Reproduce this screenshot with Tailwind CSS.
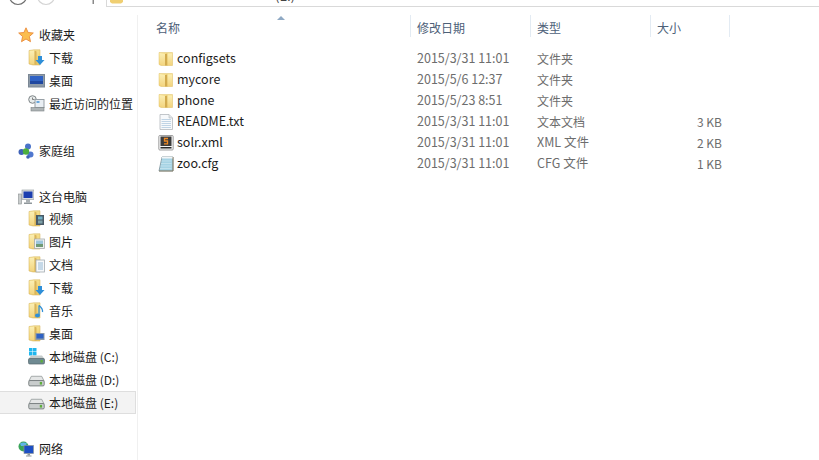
<!DOCTYPE html>
<html lang="zh-CN">
<head>
  <meta charset="UTF-8">
  <title>文件资源管理器</title>
  <script src="https://cdn.jsdelivr.net/npm/@tailwindcss/browser@4"></script>
</head>
<body class="bg-white">
  <!-- shared icons -->
  <svg class="absolute w-0 h-0">
    <defs>
      <linearGradient id="paleY" x1="0" y1="0" x2="0" y2="1"><stop offset="0" stop-color="#fbefb4"/><stop offset="1" stop-color="#f3d47e"/></linearGradient>
      <linearGradient id="deepY" x1="0" y1="0" x2="0" y2="1"><stop offset="0" stop-color="#f6e08e"/><stop offset="1" stop-color="#ecc762"/></linearGradient>
    </defs>
    <symbol id="folder" viewBox="0 0 16 16">
      <path d="M1 1.500 H14.500 V14.500 H3 L1 13.500 Z" fill="url(#deepY)" stroke="#e0c26c" stroke-width=".5"/>
      <path d="M1.500 2 L7 3 V14.500 L1.500 13.500 Z" fill="url(#paleY)"/>
      <path d="M7 3 L9.500 2.500 V14.500 H7 Z" fill="#d2ab4e"/>
      <path d="M9.500 2.500 H14 V14 H9.500 Z" fill="url(#paleY)"/>
    </symbol>
    <symbol id="navfolder" viewBox="0 0 16 18">
      <path d="M1 1.500 L6 .8 H12 V16 H5 L1 15 Z" fill="url(#deepY)" stroke="#d9bb68" stroke-width=".6"/>
      <path d="M1.600 2 L6.500 1.500 V15.600 L1.600 14.600 Z" fill="url(#paleY)"/>
      <path d="M6.500 1.500 L8.500 2.600 V15.800 L6.500 15.600 Z" fill="#d8b45c"/>
    </symbol>
    <symbol id="drive" viewBox="0 0 18 12">
      <path d="M3.500 1 H14.500 L17 6 H1 Z" fill="#e4e6e6" stroke="#8d9394" stroke-width=".8"/>
      <rect x=".8" y="5.500" width="16.400" height="5.700" rx="1.300" fill="#c9cdcd" stroke="#6f7677" stroke-width=".9"/>
      <rect x="12.500" y="7" width="2.400" height="2.800" fill="#5dae3c"/>
    </symbol>
  </svg>

  <div class="w-[819px] h-[460px] overflow-hidden flex flex-col font-['Noto_Sans_CJK_SC','Noto_Sans',sans-serif] text-[12px] text-[#1c1c1c]">
    <!-- toolbar, mostly cut off at the top -->
    <div class="h-[7px] flex shrink-0">
      <svg width="106" height="7" class="shrink-0">
        <circle cx="18" cy="-4" r="8.500" fill="none" stroke="#6f6f6f" stroke-width="1.200"/>
        <circle cx="46" cy="-4" r="8.500" fill="none" stroke="#d4d4d4" stroke-width="1.200"/>
        <rect x="92.500" y="0" width="1.500" height="4" fill="#8a8a8a"/>
      </svg>
      <div class="flex-1 border-l border-b border-[#d9d9d9] flex overflow-hidden relative">
        <svg width="14" height="4" class="ml-[3px] shrink-0"><path d="M0 0 H13 V2 L11 3.500 H2 L0 2 Z" fill="#f0cf72"/></svg>
        <span class="absolute left-[168px] bottom-[5px] leading-none text-[13px] text-[#444] h-[4px] flex items-end"><span class="mb-[-1px]">(E:)</span></span>
      </div>
    </div>

    <div class="flex flex-1 min-h-0 pt-[8px]">
      <!-- navigation pane -->
      <nav class="w-[138px] shrink-0 border-r border-[#f0f0f0] pt-[8px]">
        <div class="h-[23px] flex items-center pl-[18px] gap-[5px]">
          <svg width="16" height="16" viewBox="0 0 16 16"><path d="M8 .8 L10.100 5.500 L15.300 6 L11.400 9.500 L12.500 14.700 L8 12 L3.500 14.700 L4.600 9.500 L.7 6 L5.900 5.500 Z" fill="#fbbd4e" stroke="#ea8a3a" stroke-width=".9"/></svg>
          <span>收藏夹</span>
        </div>
        <div class="h-[23px] flex items-center pl-[28px] gap-[4px]">
          <svg width="17" height="18" viewBox="0 0 17 18"><use href="#navfolder" width="16" height="18"/><path d="M10 7 H14 V11 H16.500 L12 16 L7.500 11 H10 Z" fill="#2f8fd8"/></svg>
          <span>下载</span>
        </div>
        <div class="h-[23px] flex items-center pl-[28px] gap-[4px]">
          <svg width="17" height="14" viewBox="0 0 17 14"><rect x=".5" y=".5" width="16" height="12.500" fill="#8d9aa8" stroke="#7b8794"/><rect x="2" y="2" width="13" height="8" fill="#2f62c4"/><rect x="2" y="7" width="13" height="3" fill="#1f47a0"/></svg>
          <span>桌面</span>
        </div>
        <div class="h-[23px] flex items-center pl-[28px] gap-[4px]">
          <svg width="17" height="17" viewBox="0 0 17 17"><circle cx="4.500" cy="4.500" r="3.800" fill="#e8ecec" stroke="#7d8486"/><path d="M4.500 2.500 V4.500 H6.500" fill="none" stroke="#555" stroke-width=".7"/><rect x="7" y="4.500" width="9" height="8" fill="#e9eef3" stroke="#98a0a6"/><rect x="8.500" y="6" width="3" height="2" fill="#6aa7dc"/><rect x="3" y="12.500" width="13" height="3.500" fill="#aeb4b6" stroke="#7d8486" stroke-width=".6"/></svg>
          <span>最近访问的位置</span>
        </div>

        <div class="h-[23px] mt-[24px] flex items-center pl-[18px] gap-[5px]">
          <svg width="16" height="16" viewBox="0 0 16 16"><circle cx="10" cy="3.500" r="3" fill="#4a73c9"/><circle cx="3.500" cy="9" r="3" fill="#3f62b8"/><circle cx="12.500" cy="11.500" r="3" fill="#5078cf"/><circle cx="10" cy="14" r="1.800" fill="#3f62b8"/><circle cx="8" cy="8.500" r="3.200" fill="#4cae3f"/></svg>
          <span>家庭组</span>
        </div>

        <div class="h-[22px] pt-[2px] mt-[23px] flex items-center pl-[18px] gap-[5px]">
          <svg width="16" height="16" viewBox="0 0 16 16"><rect x=".5" y="5" width="3" height="10" fill="#c9cdcd" stroke="#8a9092" stroke-width=".6"/><rect x="4" y="1" width="12" height="9.500" fill="#d8dcdf" stroke="#8f979b" stroke-width=".6"/><rect x="5.500" y="2.500" width="9" height="6.500" fill="#1c3fb0"/><rect x="8" y="10.500" width="4" height="3" fill="#aab0b3"/><rect x="6" y="13.500" width="8" height="1.500" fill="#8f979b"/></svg>
          <span>这台电脑</span>
        </div>
        <div class="h-[23px] flex items-center pl-[28px] gap-[4px]">
          <svg width="17" height="18" viewBox="0 0 17 18"><use href="#navfolder" width="16" height="18"/><rect x="8" y="5" width="8" height="10" fill="#4a5a66"/><rect x="10" y="6.500" width="4.500" height="3" fill="#6fb0c8"/><rect x="10" y="10.500" width="4.500" height="3" fill="#7ea0a8"/></svg>
          <span>视频</span>
        </div>
        <div class="h-[23px] flex items-center pl-[28px] gap-[4px]">
          <svg width="17" height="18" viewBox="0 0 17 18"><use href="#navfolder" width="16" height="18"/><rect x="6.500" y="6" width="10" height="9.500" fill="#eef0f0" stroke="#a9adad" stroke-width=".8"/><rect x="8" y="7.500" width="7" height="3.500" fill="#9cc6dc"/><rect x="8" y="11" width="7" height="3" fill="#6f9a74"/></svg>
          <span>图片</span>
        </div>
        <div class="h-[23px] flex items-center pl-[28px] gap-[4px]">
          <svg width="17" height="18" viewBox="0 0 17 18"><use href="#navfolder" width="16" height="18"/><rect x="8" y="4" width="8.500" height="12" fill="#f6f8fa" stroke="#a3aab0" stroke-width=".8"/><path d="M10 7 H15 M10 9 H15 M10 11 H15 M10 13 H15" stroke="#7fa8cc" stroke-width=".8"/></svg>
          <span>文档</span>
        </div>
        <div class="h-[23px] flex items-center pl-[28px] gap-[4px]">
          <svg width="17" height="18" viewBox="0 0 17 18"><use href="#navfolder" width="16" height="18"/><path d="M10 7 H14 V11 H16.500 L12 16 L7.500 11 H10 Z" fill="#2f8fd8"/></svg>
          <span>下载</span>
        </div>
        <div class="h-[23px] flex items-center pl-[28px] gap-[4px]">
          <svg width="17" height="18" viewBox="0 0 17 18"><use href="#navfolder" width="16" height="18"/><path d="M11 3.500 C14 6 15 7.500 14.500 10" fill="none" stroke="#2f8fd8" stroke-width="1.300"/><path d="M11 3.500 V13" stroke="#2f8fd8" stroke-width="1.200"/><ellipse cx="9.500" cy="13.500" rx="2.500" ry="2" fill="#2f8fd8"/></svg>
          <span>音乐</span>
        </div>
        <div class="h-[23px] flex items-center pl-[28px] gap-[4px]">
          <svg width="17" height="18" viewBox="0 0 17 18"><use href="#navfolder" width="16" height="18"/><rect x="7.500" y="8" width="9" height="7" fill="#8d9aa8"/><rect x="8.500" y="9" width="7" height="4.500" fill="#2f62c4"/></svg>
          <span>桌面</span>
        </div>
        <div class="h-[23px] flex items-center pl-[28px] gap-[4px]">
          <svg width="17" height="17" viewBox="0 0 17 17"><g fill="#1fb6ee"><rect x="1" y="0" width="3.500" height="3.500"/><rect x="5" y="0" width="3.500" height="3.500"/><rect x="1" y="4" width="3.500" height="3.500"/><rect x="5" y="4" width="3.500" height="3.500"/></g><path d="M3 7.500 H14 L16.500 11 H.5 Z" fill="#c5cbcb"/><rect x=".5" y="10.500" width="16" height="5.500" rx="1.300" fill="#6f8a92" stroke="#55666c" stroke-width=".7"/><rect x="12.500" y="12" width="2.300" height="2.500" fill="#5dae3c"/></svg>
          <span>本地磁盘 (C:)</span>
        </div>
        <div class="h-[23px] flex items-center pl-[28px] gap-[4px]">
          <svg width="17" height="12" class="mt-[3px]"><use href="#drive" width="17" height="12"/></svg>
          <span>本地磁盘 (D:)</span>
        </div>
        <div class="h-[23px] w-[136px] flex items-center pl-[28px] gap-[4px] bg-[#f3f3f3] border border-l-0 border-[#dedede]">
          <svg width="17" height="12" class="mt-[3px]"><use href="#drive" width="17" height="12"/></svg>
          <span>本地磁盘 (E:)</span>
        </div>

        <div class="h-[23px] mt-[23px] flex items-center pl-[18px] gap-[5px]">
          <svg width="16" height="16" viewBox="0 0 16 16"><circle cx="5.500" cy="5.500" r="5" fill="#3aa55a"/><path d="M2 2.500 C4 1 7 1 9 2.500 L7 5 L3 5 Z" fill="#5fb6e8"/><rect x="6" y="4.500" width="9.500" height="8" fill="#1c4fc4" stroke="#8f979b" stroke-width=".7"/><rect x="9.500" y="12.500" width="2.500" height="2" fill="#8f979b"/><rect x="8" y="14.500" width="5.500" height="1" fill="#8f979b"/></svg>
          <span>网络</span>
        </div>
      </nav>

      <!-- file list -->
      <main class="flex-1 min-w-0">
        <div class="relative h-[22px] grid grid-cols-[272px_120px_120px_80px] text-[#4d6078]">
          <span class="absolute left-[139px] top-[1px] w-0 h-0 border-x-[4px] border-x-transparent border-b-[4px] border-b-[#8fa9c4]"></span>
          <div class="pl-[18px] pt-[4px] flex items-center">名称</div>
          <div class="pl-[6px] pt-[4px] flex items-center border-l border-[#e3ebf3]">修改日期</div>
          <div class="pl-[6px] pt-[4px] flex items-center border-l border-[#e3ebf3]">类型</div>
          <div class="pl-[6px] pt-[4px] flex items-center border-x border-[#e3ebf3]">大小</div>
        </div>

        <div class="pt-[11px] text-[#6d6d6d]">
          <div class="h-[21px] grid grid-cols-[272px_120px_120px_80px] items-center">
            <div class="pl-[20px] flex items-center gap-[3px] text-[#1c1c1c] text-[12.500px]"><svg width="16" height="16"><use href="#folder"/></svg><span>configsets</span></div>
            <div class="pl-[7px] text-[12.500px]">2015/3/31 11:01</div>
            <div class="pl-[7px]">文件夹</div>
            <div class="pr-[8px] text-right"></div>
          </div>
          <div class="h-[21px] grid grid-cols-[272px_120px_120px_80px] items-center">
            <div class="pl-[20px] flex items-center gap-[3px] text-[#1c1c1c] text-[12.500px]"><svg width="16" height="16"><use href="#folder"/></svg><span>mycore</span></div>
            <div class="pl-[7px] text-[12.500px]">2015/5/6 12:37</div>
            <div class="pl-[7px]">文件夹</div>
            <div class="pr-[8px] text-right"></div>
          </div>
          <div class="h-[21px] grid grid-cols-[272px_120px_120px_80px] items-center">
            <div class="pl-[20px] flex items-center gap-[3px] text-[#1c1c1c] text-[12.500px]"><svg width="16" height="16"><use href="#folder"/></svg><span>phone</span></div>
            <div class="pl-[7px] text-[12.500px]">2015/5/23 8:51</div>
            <div class="pl-[7px]">文件夹</div>
            <div class="pr-[8px] text-right"></div>
          </div>
          <div class="h-[21px] grid grid-cols-[272px_120px_120px_80px] items-center">
            <div class="pl-[20px] flex items-center gap-[3px] text-[#1c1c1c] text-[12.500px]">
              <svg width="16" height="16" viewBox="0 0 16 16"><path d="M2 .5 H11 L14.500 4 V15.500 H2 Z" fill="#f7f9fb" stroke="#b4b8bc" stroke-width=".8"/><path d="M11 .5 V4 H14.500" fill="#e2e5e8" stroke="#b4b8bc" stroke-width=".6"/><path d="M3.500 5.500 H13 M3.500 7.500 H13 M3.500 9.500 H13 M3.500 11.500 H13 M3.500 13.500 H13" stroke="#b9cfe2" stroke-width=".9"/></svg>
              <span>README.txt</span>
            </div>
            <div class="pl-[7px] text-[12.500px]">2015/3/31 11:01</div>
            <div class="pl-[7px]">文本文档</div>
            <div class="pr-[8px] text-right">3 KB</div>
          </div>
          <div class="h-[21px] grid grid-cols-[272px_120px_120px_80px] items-center">
            <div class="pl-[20px] flex items-center gap-[3px] text-[#1c1c1c] text-[12.500px]">
              <svg width="16" height="16" viewBox="0 0 16 16"><rect x=".8" y=".5" width="14.400" height="14.500" rx="1" fill="#f3f3f3" stroke="#8a8a8a" stroke-width=".8"/><rect x="2.500" y="1.500" width="11" height="9.500" fill="#3c3c3c"/><rect x="2.500" y="12" width="11" height="1.500" fill="#2a2a2a"/><path d="M10 3.500 H6.500 V6 H9.500 V8.800 H6" fill="none" stroke="#f08a24" stroke-width="1.300"/></svg>
              <span>solr.xml</span>
            </div>
            <div class="pl-[7px] text-[12.500px]">2015/3/31 11:01</div>
            <div class="pl-[7px] text-[12.500px]">XML 文件</div>
            <div class="pr-[8px] text-right">2 KB</div>
          </div>
          <div class="h-[21px] grid grid-cols-[272px_120px_120px_80px] items-center">
            <div class="pl-[20px] flex items-center gap-[3px] text-[#1c1c1c] text-[12.500px]">
              <svg width="16" height="16" viewBox="0 0 16 16"><path d="M4 1 H15 V15 H1 Z" fill="#a6d3e4" stroke="#7a8f98" stroke-width=".8"/><path d="M4 1 H15 V2.500 H3.600 Z" fill="#f2f6f8"/><path d="M3.500 5 H13.500 M3 7.500 H13.500 M2.500 10 H13.500 M2 12.500 H13.500" stroke="#c7e4ef" stroke-width=".8"/><path d="M15 1 V15 H1" fill="none" stroke="#8a7a5a" stroke-width=".8"/></svg>
              <span>zoo.cfg</span>
            </div>
            <div class="pl-[7px] text-[12.500px]">2015/3/31 11:01</div>
            <div class="pl-[7px] text-[12.500px]">CFG 文件</div>
            <div class="pr-[8px] text-right">1 KB</div>
          </div>
        </div>
      </main>
    </div>
  </div>
</body>
</html>
